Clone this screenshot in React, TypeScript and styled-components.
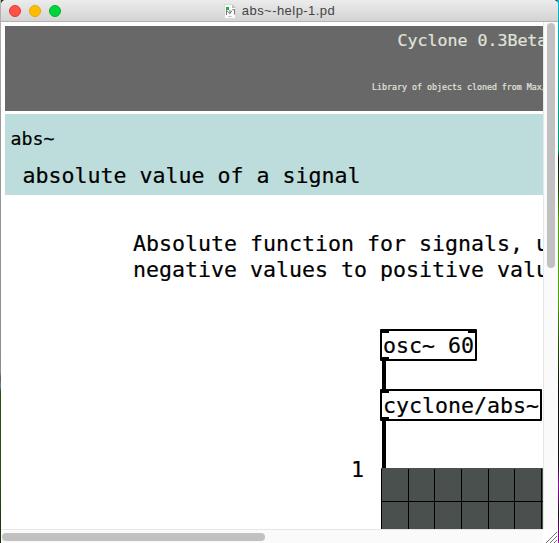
import React from "react";
import styled, { createGlobalStyle } from "styled-components";

const Global = createGlobalStyle`
  * { box-sizing: border-box; }
  body { margin: 0; overflow: hidden; background: #2a4010; }
`;

const Desktop = styled.div`
  width: 559px;
  height: 543px;
  padding: 0 1px;
  overflow: hidden;
  background:
    linear-gradient(#b4b4b4, #999 130px, #8c8c8c 372px, #6b5560 378px, #4d8f99 386px, #2c4a12 392px, #2c4a12 480px, #1a2c0a) left / 1px 100% no-repeat,
    linear-gradient(#00b9d4, #00a99f 60px, #009a70 150px, #0a120a 158px, #1c3a08 190px, #57a000 220px, #579f05 300px, #26450c 345px, #0a0a0a 390px, #111 465px, #8f0fa0 485px, #111 515px, #a600b8) right / 2px 100% no-repeat;
`;

const Window = styled.div`
  display: flex;
  flex-direction: column;
  height: 543px;
  background: #fff;
  border-radius: 5px 5px 0 0;
  overflow: hidden;
`;

const TitleBar = styled.header`
  position: relative;
  flex: 0 0 22px;
  display: flex;
  align-items: center;
  justify-content: center;
  background: linear-gradient(#ececec, #d3d3d3);
  border-bottom: 1px solid #b2b2b2;
`;

const Lights = styled.div`
  position: absolute;
  left: 8px;
  top: 5px;
  display: flex;
  gap: 8px;
`;

const Light = styled.i<{ $fill: string; $edge: string }>`
  width: 12px;
  height: 12px;
  border-radius: 50%;
  background: ${(p) => p.$fill};
  border: 1px solid ${(p) => p.$edge};
`;

const Title = styled.div`
  display: flex;
  align-items: center;
  gap: 6px;
  font: 13px/20px "Liberation Sans", Arial, sans-serif;
  color: #444;
  letter-spacing: 0.45px;
  padding-top: 1px;
`;

const Body = styled.div`
  flex: 1;
  display: grid;
  grid-template-columns: 542px 15px;
  grid-template-rows: 507px 14px;
`;

const Patch = styled.main`
  position: relative;
  overflow: hidden;
  padding: 4px 0 0 4px;
  font-family: "DejaVu Sans Mono", monospace;
  white-space: pre;
  color: #000;
  -webkit-text-stroke: 0.2px currentColor;
`;

const Banner = styled.section`
  height: 85px;
  padding: 5px 0 0;
  background: #686868;
  color: #e0e4dc;
`;

const Subject = styled.section`
  height: 81px;
  margin-top: 3px;
  padding-top: 13px;
  background: #bddddc;
`;

const Line = styled.div<{ $size: number; $height: number; $indent: number; $gap?: number }>`
  font-size: ${(p) => p.$size}px;
  line-height: ${(p) => p.$height}px;
  margin-top: ${(p) => p.$gap ?? 0}px;
  padding-left: ${(p) => p.$indent}px;
`;

const Node = styled.div<{ $x: number; $y: number; $w: number }>`
  position: absolute;
  left: ${(p) => p.$x}px;
  top: ${(p) => p.$y}px;
  width: ${(p) => p.$w}px;
  height: 32px;
  border: 2px solid #000;
  border-radius: 1px;
  padding-left: 1px;
  font-size: 21.6px;
  line-height: 30px;
  background: #fff;
`;

const Port = styled.i<{ $bottom?: boolean; $right?: boolean }>`
  position: absolute;
  ${(p) => (p.$right ? "right: -1px;" : "left: -1px;")}
  ${(p) => (p.$bottom ? "bottom: -1px;" : "top: -1px;")}
  width: 8px;
  height: 3px;
  background: #000;
`;

const Wire = styled.i<{ $y: number; $h: number }>`
  position: absolute;
  left: 381px;
  top: ${(p) => p.$y}px;
  width: 4px;
  height: ${(p) => p.$h}px;
  background: #000;
`;

const Tick = styled.span`
  position: absolute;
  left: 350px;
  top: 435px;
  font-size: 21.6px;
  line-height: 26px;
`;

const Scope = styled.svg`
  position: absolute;
  left: 380px;
  top: 446px;
`;

const VTrack = styled.div`
  border-left: 1px solid #e7e7e7;
  background: #fafafa;
  padding: 1px 0 0 3px;
`;

const HTrack = styled.div`
  border-top: 1px solid #e7e7e7;
  background: #fafafa;
  padding: 3px 0 0 1px;
`;

const Thumb = styled.div<{ $w: number; $h: number }>`
  width: ${(p) => p.$w}px;
  height: ${(p) => p.$h}px;
  border-radius: 4px;
  background: #c1c1c1;
`;

const Corner = styled.div`
  background: #fff;
  svg { display: block; }
`;

const DocIcon = () => (
  <svg width="12" height="15" viewBox="0 0 12 15">
    <path d="M.5.5h7.5l3.5 3.5v10.500H.5z" fill="#fbfbfb" stroke="#d0d0d0" strokeWidth=".7" />
    <path d="M8 .5v3.500h3.500z" fill="#bbb" />
    <rect x="2" y="3" width="3" height="3" fill="#12b83a" />
    <path d="M2.500 6v5M3 7l3 2.500V6M6 9.500l2-3M8.500 5.500h2v5" fill="none" stroke="#777" />
    <path d="M4.500 12.500h3" stroke="#bbb" />
  </svg>
);

const columns = [0.5, 27.5, 53.5, 80.5, 107.5, 133.5, 160.5];

export default function App() {
  return (
    <Desktop>
      <Global />
      <Window>
        <TitleBar>
          <Lights>
            <Light $fill="#ff5147" $edge="#e9362f" />
            <Light $fill="#ffbd00" $edge="#e9a30a" />
            <Light $fill="#00d43b" $edge="#00b52b" />
          </Lights>
          <Title>
            <DocIcon />
            <span>abs~-help-1.pd</span>
          </Title>
        </TitleBar>
        <Body>
          <Patch>
            <Banner>
              <Line $size={16.6} $height={20} $indent={392.5}>Cyclone 0.3Beta</Line>
              <Line $size={8.3} $height={12} $indent={367} $gap={30}>Library of objects cloned from Max/MSP</Line>
            </Banner>
            <Subject>
              <Line $size={18.27} $height={24} $indent={5.5}>abs~</Line>
              <Line $size={21.6} $height={26} $indent={17.5} $gap={12}>absolute value of a signal</Line>
            </Subject>
            <Line $size={21.6} $height={26} $indent={128} $gap={36}>
              {"Absolute function for signals, used to convert\nnegative values to positive values."}
            </Line>
            <Wire $y={338} $h={30} />
            <Wire $y={398} $h={48} />
            <Node $x={379} $y={307} $w={97}>
              osc~ 60
              <Port /><Port $right /><Port $bottom />
            </Node>
            <Node $x={379} $y={367} $w={162}>
              cyclone/abs~
              <Port /><Port $bottom />
            </Node>
            <Tick>1</Tick>
            <Scope width="162" height="61">
              <rect width="162" height="61" fill="#4a504d" />
              {columns.map((x) => (
                <path key={x} d={`M${x} 1V61`} stroke="#000" />
              ))}
              <path d="M0 33.5H162" stroke="#000" />
            </Scope>
          </Patch>
          <VTrack><Thumb $w={8} $h={245} /></VTrack>
          <HTrack><Thumb $w={263} $h={8} /></HTrack>
          <Corner>
            <svg width="15" height="14">
              <path d="M3 14L14 3M7 14l7-7M11 14l3-3" stroke="#777" fill="none" />
            </svg>
          </Corner>
        </Body>
      </Window>
    </Desktop>
  );
}
